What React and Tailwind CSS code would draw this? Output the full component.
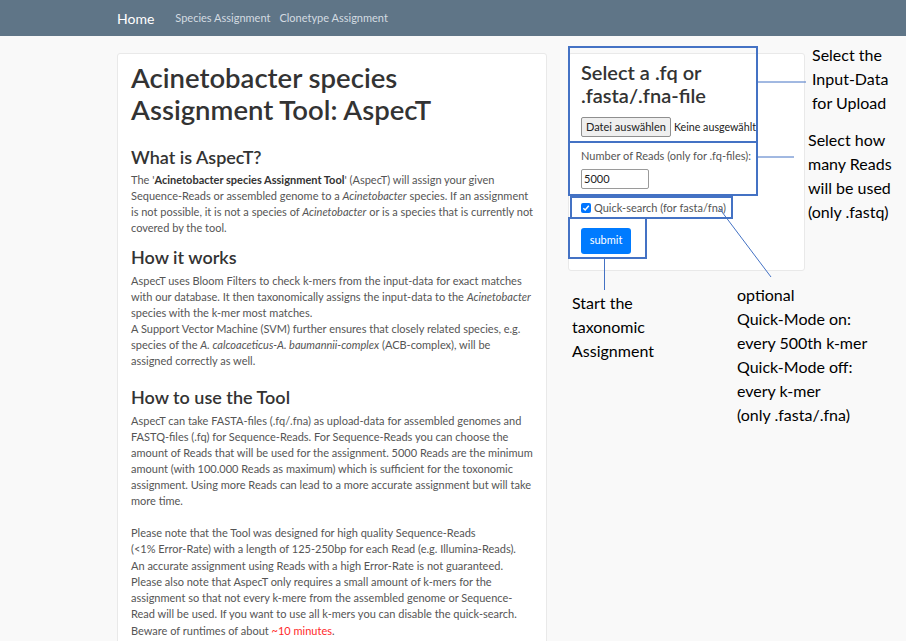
import React from "react";

const blue = "border-[#4472c4]";

function Lines({ lines, className = "" }) {
  return (
    <p className={`whitespace-nowrap ${className}`}>
      {lines.map((l, i) => (
        <span key={i} className="block">
          {l}
        </span>
      ))}
    </p>
  );
}

export default function App() {
  return (
    <div className="relative min-h-[641px] bg-[#f9f9f9] overflow-hidden" style={{ fontFamily: "Lato, 'Noto Sans', sans-serif" }}>
      {/* navbar */}
      <nav className="h-[36px] bg-[#5f7587] flex items-center pl-[117px]">
        <span className="text-white text-[14px] mr-[21px]">Home</span>
        <span className="text-[#d3dbe1] text-[11px] mr-[9px]">Species Assignment</span>
        <span className="text-[#d3dbe1] text-[11px]">Clonetype Assignment</span>
      </nav>

      <div className="flex items-start pl-[117px] pt-[17px]">
        {/* left card */}
        <div className="w-[430px] bg-white border border-[#e9e9e9] rounded-[3px] px-[13px] pt-[8px] pb-[20px] text-[#555] text-[11px] leading-[16px]">
          <h1 className="text-[#333] text-[27.5px] leading-[32px] font-semibold">
            Acinetobacter species
            <br />
            Assignment Tool: AspecT
          </h1>

          <h3 className="text-[#333] text-[18px] leading-[22px] font-semibold mt-[20px] mb-[4px]">What is AspecT?</h3>
          <Lines
            lines={[
              <>
                The '<b className="text-[#333]">Acinetobacter species Assignment Tool</b>' (AspecT) will assign your given
              </>,
              <>
                Sequence-Reads or assembled genome to a <i>Acinetobacter</i> species. If an assignment
              </>,
              <>
                is not possible, it is not a species of <i>Acinetobacter</i> or is a species that is currently not
              </>,
              "covered by the tool.",
            ]}
          />

          <h3 className="text-[#333] text-[18px] leading-[22px] font-semibold mt-[10px] mb-[5px]">How it works</h3>
          <Lines
            lines={[
              "AspecT uses Bloom Filters to check k-mers from the input-data for exact matches",
              <>
                with our database. It then taxonomically assigns the input-data to the <i>Acinetobacter</i>
              </>,
              "species with the k-mer most matches.",
              "A Support Vector Machine (SVM) further ensures that closely related species, e.g.",
              <>
                species of the <i>A. calcoaceticus-A. baumannii-complex</i> (ACB-complex), will be
              </>,
              "assigned correctly as well.",
            ]}
          />

          <h3 className="text-[#333] text-[18px] leading-[22px] font-semibold mt-[17px] mb-[5px]">How to use the Tool</h3>
          <Lines
            lines={[
              "AspecT can take FASTA-files (.fq/.fna) as upload-data for assembled genomes and",
              "FASTQ-files (.fq) for Sequence-Reads. For Sequence-Reads you can choose the",
              "amount of Reads that will be used for the assignment. 5000 Reads are the minimum",
              "amount (with 100.000 Reads as maximum) which is sufficient for the toxonomic",
              "assignment. Using more Reads can lead to a more accurate assignment but will take",
              "more time.",
            ]}
          />
          <Lines
            className="mt-[16px] leading-[16.3px]"
            lines={[
              "Please note that the Tool was designed for high quality Sequence-Reads",
              "(<1% Error-Rate) with a length of 125-250bp for each Read (e.g. Illumina-Reads).",
              "An accurate assignment using Reads with a high Error-Rate is not guaranteed.",
              "Please also note that AspecT only requires a small amount of k-mers for the",
              "assignment so that not every k-mere from the assembled genome or Sequence-",
              "Read will be used. If you want to use all k-mers you can disable the quick-search.",
              <>
                Beware of runtimes of about <span className="text-[#ff2a2a]">~10 minutes</span>.
              </>,
            ]}
          />
        </div>

        {/* right card */}
        <div className="ml-[21px] w-[237px] h-[218px] bg-white border border-[#e9e9e9] rounded-[3px] px-[12px] pt-[7px] text-[#555] text-[11px]">
          <h2 className="text-[#333] text-[20px] leading-[23px] font-semibold">
            Select a .fq or
            <br />
            .fasta/.fna-file
          </h2>
          <div className="flex items-center mt-[10px] text-[#222] text-[11px]">
            <span className="border border-[#8f8f8f] bg-[#efefef] rounded-[2px] px-[4px] h-[20px] flex items-center whitespace-nowrap">
              Datei auswählen
            </span>
            <span className="ml-[3px] whitespace-nowrap text-[10.7px]">Keine ausgewählt</span>
          </div>
          <div className="mt-[11px] leading-[16px]">Number of Reads (only for .fq-files):</div>
          <div className="mt-[5px] w-[68px] h-[20px] border border-[#9a9a9a] rounded-[2px] px-[2px] flex items-center text-[#222]">
            5000
          </div>
          <div className="mt-[11px] flex items-center">
            <span className="w-[10px] h-[10px] rounded-[2px] bg-[#0075ff] flex items-center justify-center">
              <svg width="8" height="8" viewBox="0 0 8 8">
                <path d="M1.3 4.2 L3.2 6 L6.8 1.8" fill="none" stroke="white" strokeWidth="1.5" />
              </svg>
            </span>
            <span className="ml-[3px]">Quick-search (for fasta/fna)</span>
          </div>
          <button className="mt-[11px] w-[50px] h-[26px] bg-[#007bff] text-white rounded-[3px] text-[11px]">
            submit
          </button>
        </div>
      </div>

      {/* annotation overlay */}
      <div className={`absolute left-[568px] top-[46px] w-[190px] h-[97px] border-2 ${blue}`} />
      <div className={`absolute left-[568px] top-[141px] w-[190px] h-[55px] border-2 ${blue}`} />
      <div className={`absolute left-[570px] top-[196px] w-[163px] h-[23px] border-2 ${blue}`} />
      <div className={`absolute left-[568px] top-[217px] w-[79px] h-[42px] border-2 ${blue}`} />

      <svg className="absolute left-0 top-0 pointer-events-none" width="906" height="641">
        <line x1="758" y1="82" x2="806" y2="82" stroke="#4472c4" strokeWidth="1" />
        <line x1="758" y1="157" x2="794" y2="157" stroke="#4472c4" strokeWidth="1" />
        <line x1="719" y1="208" x2="771" y2="277" stroke="#4472c4" strokeWidth="1" />
        <line x1="604.5" y1="259" x2="604.5" y2="290" stroke="#4472c4" strokeWidth="1" />
      </svg>

      <div className="absolute inset-0 pointer-events-none text-black text-[16px] leading-[24px]" style={{ fontFamily: "Lato, sans-serif" }}>
        <div className="absolute left-[812px] top-[43px] whitespace-nowrap">
          Select the
          <br />
          Input-Data
          <br />
          for Upload
        </div>
        <div className="absolute left-[808px] top-[128px] whitespace-nowrap">
          Select how
          <br />
          many Reads
          <br />
          will be used
          <br />
          (only .fastq)
        </div>
        <div className="absolute left-[572px] top-[291px] whitespace-nowrap">
          Start the
          <br />
          taxonomic
          <br />
          Assignment
        </div>
        <div className="absolute left-[737px] top-[283px] whitespace-nowrap">
          optional
          <br />
          Quick-Mode on:
          <br />
          every 500th k-mer
          <br />
          Quick-Mode off:
          <br />
          every k-mer
          <br />
          (only .fasta/.fna)
        </div>
      </div>
    </div>
  );
}
